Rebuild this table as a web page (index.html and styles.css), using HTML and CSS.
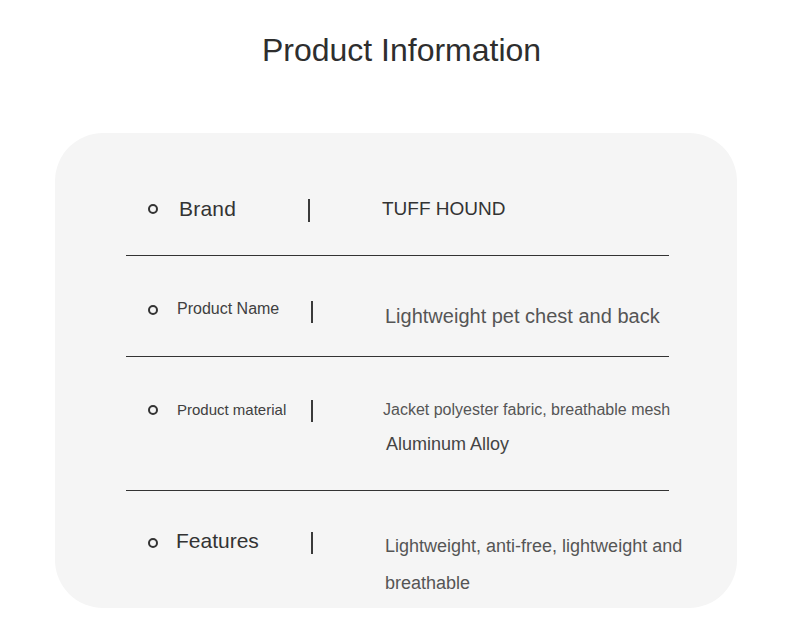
FILE: index.html
```html
<!DOCTYPE html>
<html lang="en">
<head>
<meta charset="utf-8">
<title>Product Information</title>
<link rel="stylesheet" href="styles.css">
</head>
<body>
<h1 class="title">Product Information</h1>
<section class="card">
  <div class="row row--brand">
    <span class="bullet"></span>
    <div class="label">Brand</div>
    <span class="bar"></span>
    <div class="value">TUFF HOUND</div>
  </div>
  <div class="row row--name">
    <span class="bullet"></span>
    <div class="label">Product Name</div>
    <span class="bar"></span>
    <div class="value">Lightweight pet chest and back</div>
  </div>
  <div class="row row--material">
    <span class="bullet"></span>
    <div class="label">Product material</div>
    <span class="bar"></span>
    <div class="value">
      <div class="value-main">Jacket polyester fabric, breathable mesh</div>
      <div class="value-sub">Aluminum Alloy</div>
    </div>
  </div>
  <div class="row row--features">
    <span class="bullet"></span>
    <div class="label">Features</div>
    <span class="bar"></span>
    <div class="value">Lightweight, anti-free, lightweight and breathable</div>
  </div>
</section>
</body>
</html>
```
FILE: styles.css
```css
html, body {
  margin: 0;
  padding: 0;
  background: #ffffff;
}

body {
  font-family: "Liberation Sans", Arial, sans-serif;
  color: #333333;
  width: 790px;
}

.title {
  margin: 30px 0 63px;
  padding-left: 13px;
  font-size: 32px;
  line-height: 40px;
  font-weight: normal;
  text-align: center;
  color: #2e2e2e;
}

.card {
  margin-left: 55px;
  width: 682px;
  background: #f5f5f5;
  border-radius: 48px;
  overflow: hidden;
}

.row {
  display: grid;
  grid-template-columns: 51px 134px 74px 300px;
  align-items: start;
  margin: 0 68px 0 71px;
  border-bottom: 1px solid #333333;
}

.row:last-child {
  border-bottom: none;
}

.bullet {
  display: block;
  margin-left: 22px;
  width: 6px;
  height: 6px;
  border: 2.5px solid #333333;
  border-radius: 50%;
}

.bar {
  display: block;
  width: 2px;
  background: #3a3a3a;
}

.label {
  line-height: 30px;
  color: #3a3a3a;
  white-space: nowrap;
}

.value {
  line-height: 30px;
  color: #555555;
}

/* Brand */
.row--brand {
  grid-template-columns: 51px 131px 74px 300px;
  padding: 61px 0 31px;
}
.row--brand .bullet { margin-top: 10px; }
.row--brand .bar { margin-top: 5px; height: 23px; }
.row--brand .label { font-size: 21px; margin-left: 2px; color: #333333; letter-spacing: 0.2px; }
.row--brand .value { font-size: 19px; color: #333333; }

/* Product name */
.row--name {
  padding: 38px 0 25px;
}
.row--name .bullet { margin-top: 11px; }
.row--name .bar { margin-top: 7px; height: 22px; }
.row--name .label { font-size: 16px; color: #404040; }
.row--name .value { font-size: 20px; margin-top: 7px; }

/* Product material */
.row--material {
  padding: 38px 0 31px;
}
.row--material .bullet { margin-top: 10px; }
.row--material .bar { margin-top: 5px; height: 22px; }
.row--material .label { font-size: 15px; color: #404040; }
.row--material .value-main { font-size: 16px; margin-left: -2px; }
.row--material .value-sub { font-size: 18px; margin-top: 4px; margin-left: 1px; color: #444444; }

/* Features */
.row--features {
  padding: 35px 0 6px;
}
.row--features .bullet { margin-top: 12px; }
.row--features .bar { margin-top: 6px; height: 22px; }
.row--features .label { font-size: 21px; margin-left: -1px; color: #333333; }
.row--features .value { font-size: 18px; line-height: 37px; margin-top: 2px; }
```
